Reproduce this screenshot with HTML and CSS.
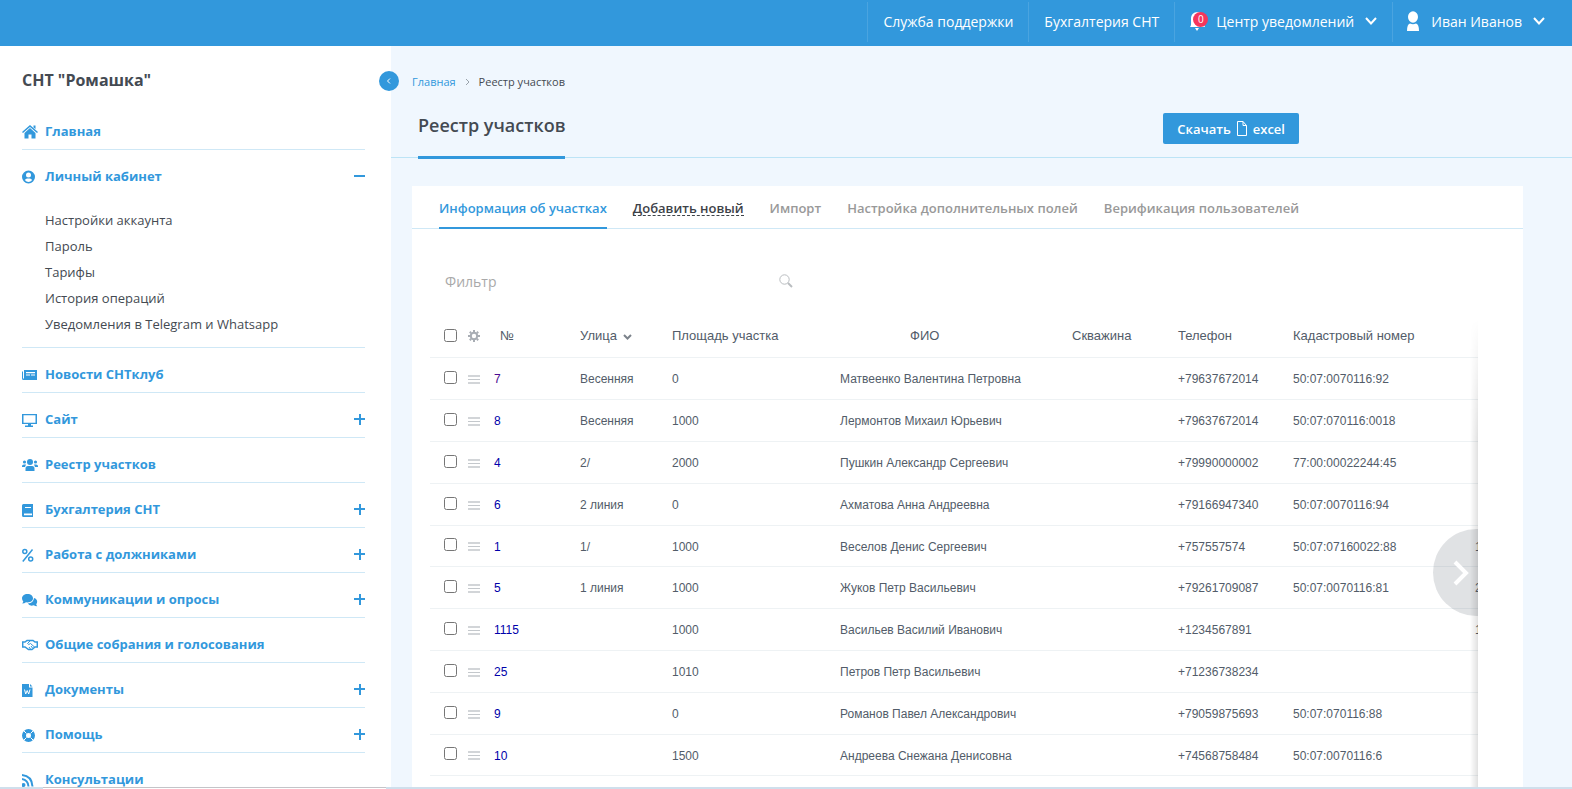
FILE: index.html
```html
<!DOCTYPE html>
<html lang="ru">
<head>
<meta charset="utf-8">
<title>Реестр участков</title>
<link rel="stylesheet" href="styles.css">
</head>
<body>
<header class="topbar">
  <a class="top-link" href="#">Служба поддержки</a>
  <a class="top-link" href="#">Бухгалтерия СНТ</a>
  <button class="top-link top-notify" type="button">
    <span class="bell">
      <svg width="18" height="20" viewBox="0 0 18 20"><path fill="#fff" d="M0 16 C1.500 14.500 1 12 1 8 C1 4 3 1 8 1 C12 1 14 4 14 9 C14 12 14 14.500 15 16 Z M5 17 H9 L7 20 Z"/></svg>
      <span class="badge">0</span>
    </span>
    Центр уведомлений
    <svg class="chev" width="12" height="8" viewBox="0 0 12 8"><path d="M1 1 L6 6.500 L11 1"/></svg>
  </button>
  <button class="top-link top-user" type="button">
    <svg width="14" height="20" viewBox="0 0 14 20"><ellipse cx="7" cy="6" rx="5" ry="5.700" fill="#fff"/><path fill="#fff" d="M1 20 C1 15.500 2 13 4 12.500 C6 13.500 8 13.500 10 12.500 C12 13 13 15.500 13 20 Z"/></svg>
    Иван Иванов
    <svg class="chev" width="12" height="8" viewBox="0 0 12 8"><path d="M1 1 L6 6.500 L11 1"/></svg>
  </button>
</header>
<div class="layout">
  <aside class="sidebar">
    <h2 class="org">СНТ "Ромашка"</h2>
    <button class="collapse" type="button" aria-label="Свернуть меню"><svg width="6" height="8" viewBox="0 0 6 8"><path d="M4 1.500 L1.500 4 L4 6.500"/></svg></button>
    <nav class="menu">
      <div class="item"><svg class="ico" viewBox="0 0 16 14"><path d="M8 0 L16 7 L15 8 L8 2 L1 8 L0 7 Z M11.500 0.500 H13.500 V4 L11.500 2.500 Z M8 3 L13.500 8 V13.500 H9.500 V9.500 H6.500 V13.500 H2.500 V8 Z"/></svg><a href="#">Главная</a></div>
      <div class="item open"><svg class="ico" viewBox="0 0 16 14"><path fill-rule="evenodd" d="M6.500 0.500 A6.500 6.500 0 1 1 6.500 13.500 A6.500 6.500 0 1 1 6.500 0.500 Z M6.500 2.500 A2.500 2.500 0 1 0 6.500 7.500 A2.500 2.500 0 1 0 6.500 2.500 Z M2.800 10 Q4.500 12 6.500 12 T10.200 10 Q9 8.500 8 8.500 H5 Q4 8.500 2.800 10 Z"/></svg><a href="#">Личный кабинет</a><button class="toggle minus" type="button" aria-label="Свернуть"></button></div>
      <ul class="sub">
        <li><a href="#">Настройки аккаунта</a></li>
        <li><a href="#">Пароль</a></li>
        <li><a href="#">Тарифы</a></li>
        <li><a href="#">История операций</a></li>
        <li><a href="#">Уведомления в Telegram и Whatsapp</a></li>
      </ul>
      <div class="item"><svg class="ico" viewBox="0 0 16 14"><path fill-rule="evenodd" d="M2 2 H15 V12 H1.500 Q0 12 0 10.500 V3.500 H1 V10.500 H2 Z M4 4 V5.200 H13 V4 Z M4 6.500 V7.500 H8 V6.500 Z M9 6.500 V7.500 H13 V6.500 Z"/></svg><a href="#">Новости СНТклуб</a></div>
      <div class="item"><svg class="ico" viewBox="0 0 16 14"><path fill-rule="evenodd" d="M0 1 H15 V11 H9 V12.500 H11 V14 H3 V12.500 H6 V11 H0 Z M1.500 2.200 V9.800 H13.500 V2.200 Z"/></svg><a href="#">Сайт</a><button class="toggle" type="button" aria-label="Развернуть"></button></div>
      <div class="item"><svg class="ico" viewBox="0 0 16 14"><circle cx="8" cy="4" r="3"/><circle cx="2.500" cy="4" r="1.600"/><circle cx="13.500" cy="4" r="1.600"/><path d="M3.500 13 V10.500 Q3.500 8 6 8 H10 Q12.500 8 12.500 10.500 V13 Z M0 9 V8 Q0 6.500 2 6.500 H4 L3 9 Z M16 9 V8 Q16 6.500 14 6.500 H12 L13 9 Z"/></svg><a href="#">Реестр участков</a></div>
      <div class="item"><svg class="ico" viewBox="0 0 16 14"><path fill-rule="evenodd" d="M1.500 1 H11 V14 H1.500 Q0 14 0 12.500 V2.500 Q0 1 1.500 1 Z M3 4 V5 H9 V4 Z M2 10.500 V12.300 H10 V10.500 Z"/></svg><a href="#">Бухгалтерия СНТ</a><button class="toggle" type="button" aria-label="Развернуть"></button></div>
      <div class="item"><svg class="ico line mid" viewBox="0 0 16 14"><circle cx="2.800" cy="3.500" r="2"/><circle cx="8.700" cy="11" r="2"/><path d="M10.500 1.500 L0.800 13.500"/></svg><a href="#">Работа с должниками</a><button class="toggle" type="button" aria-label="Развернуть"></button></div>
      <div class="item"><svg class="ico" viewBox="0 0 16 14"><path d="M5.500 1 C9 1 11 3 11 5.300 S9 9.500 5.500 9.500 L4 9.300 Q2.500 10.500 0.200 10.500 Q1 9.500 1.300 8.500 Q0 7 0 5.300 C0 3 2.200 1 5.500 1 Z M12 5 Q15.200 6 15.200 8.800 Q15.200 10.200 14.200 11.300 Q14.500 12.500 15.200 13.200 Q13 13.200 11.800 12.300 Q7.500 13.500 5.800 10.500 Q11.500 10 12 5 Z"/></svg><a href="#">Коммуникации и опросы</a><button class="toggle" type="button" aria-label="Развернуть"></button></div>
      <div class="item"><svg class="ico line mid" viewBox="0 0 16 14"><path d="M3 9 H0.700 V4 H3 L5 2.500 H11 L13 4 H15.300 V9 H13 L10 11.500 H6.500 Z"/><path class="fine" d="M8 3 L5.500 5.500 Q6.500 7.500 8.500 5.500 L12.500 9 M9 8 L10.500 10 M7 9 L8.500 11"/></svg><a href="#">Общие собрания и голосования</a></div>
      <div class="item"><svg class="ico" viewBox="0 0 16 14"><path d="M0 1 H7 V4.500 H10.500 V14 H0 Z M8 1 L10.500 3.500 H8 Z"/><path class="cut" d="M2.500 6.500 L3.700 11 L5.200 7.500 L6.700 11 L8 6.500"/></svg><a href="#">Документы</a><button class="toggle" type="button" aria-label="Развернуть"></button></div>
      <div class="item"><svg class="ico line" viewBox="0 0 16 14"><circle class="ring" cx="6.500" cy="7.500" r="4.500"/><path class="cut" d="M2 3 L4.500 5.500 M11 3 L8.500 5.500 M2 12 L4.500 9.500 M11 12 L8.500 9.500"/></svg><a href="#">Помощь</a><button class="toggle" type="button" aria-label="Развернуть"></button></div>
      <div class="item"><svg class="ico line" viewBox="0 0 16 14"><path d="M0 2 Q10 3 10.500 13.500 M0 6 Q6 7 6.500 13.500"/><circle cx="1.500" cy="12" r="1"/></svg><a href="#">Консультации</a></div>
    </nav>
  </aside>
  <main class="main">
    <div class="crumbs"><a href="#">Главная</a><svg width="5" height="8" viewBox="0 0 5 8"><path d="M1 1 L4 4 L1 7"/></svg><span>Реестр участков</span></div>
    <div class="head">
      <h1 class="title">Реестр участков</h1>
      <button class="download" type="button">Скачать <svg width="10" height="15" viewBox="0 0 10 15"><path d="M1 0.500 H6 L9.500 4.500 V14.500 H0.500 V0.500 Z M6 0.500 V4.500 H9.500"/></svg> excel</button>
    </div>
    <section class="panel">
      <nav class="tabs">
        <a class="tab active" href="#">Информация об участках</a>
        <a class="tab add" href="#"><span>Добавить новый</span></a>
        <a class="tab" href="#">Импорт</a>
        <a class="tab" href="#">Настройка дополнительных полей</a>
        <a class="tab" href="#">Верификация пользователей</a>
      </nav>
      <div class="filter">
        <input class="filter-input" type="text" placeholder="Фильтр" aria-label="Фильтр">
        <button class="search" type="button" aria-label="Найти"><svg width="14" height="14" viewBox="0 0 14 14"><circle cx="5.500" cy="5.500" r="4.700"/><path d="M9 9 L13 13" stroke-width="2"/></svg></button>
      </div>
      <div class="grid-wrap">
        <table class="grid">
          <colgroup><col class="c-check"><col class="c-menu"><col class="c-num"><col class="c-street"><col class="c-area"><col class="c-name"><col class="c-well"><col class="c-phone"><col class="c-cad"><col></colgroup>
          <thead><tr>
            <th><input type="checkbox" aria-label="Выбрать все"></th>
            <th><svg class="gear" width="12" height="12" viewBox="0 0 12 12"><circle cx="6" cy="6" r="3.200"/><path d="M6 0 V2 M6 10 V12 M0 6 H2 M10 6 H12 M1.800 1.800 L3.200 3.200 M8.800 8.800 L10.200 10.200 M1.800 10.200 L3.200 8.800 M8.800 3.200 L10.200 1.800"/></svg></th>
            <th class="h-num">№</th><th>Улица <svg class="sort" width="9" height="6" viewBox="0 0 9 6"><path d="M1 1 L4.500 4.500 L8 1"/></svg></th><th>Площадь участка</th><th class="h-name">ФИО</th><th>Скважина</th><th>Телефон</th><th>Кадастровый номер</th><th></th>
          </tr></thead>
          <tbody id="rows"></tbody>
        </table>
        <button class="next" type="button" aria-label="Прокрутить вправо"><svg width="16" height="26" viewBox="0 0 16 26"><path d="M2 2 L13 13 L2 24"/></svg></button>
      </div>
    </section>
  </main>
</div>
<div class="bottom-strip"><div class="strip-window"></div></div>
<script src="rows.js"></script>
</body>
</html>
```
FILE: rows.js
```js
const rows = [
  ["7", "Весенняя", "0", "Матвеенко Валентина Петровна", "+79637672014", "50:07:0070116:92", ""],
  ["8", "Весенняя", "1000", "Лермонтов Михаил Юрьевич", "+79637672014", "50:07:070116:0018", ""],
  ["4", "2/", "2000", "Пушкин Александр Сергеевич", "+79990000002", "77:00:00022244:45", ""],
  ["6", "2 линия", "0", "Ахматова Анна Андреевна", "+79166947340", "50:07:0070116:94", ""],
  ["1", "1/", "1000", "Веселов Денис Сергеевич", "+757557574", "50:07:07160022:88", "1"],
  ["5", "1 линия", "1000", "Жуков Петр Васильевич", "+79261709087", "50:07:0070116:81", "2"],
  ["1115", "", "1000", "Васильев Василий Иванович", "+1234567891", "", "1"],
  ["25", "", "1010", "Петров Петр Васильевич", "+71236738234", "", ""],
  ["9", "", "0", "Романов Павел Александрович", "+79059875693", "50:07:070116:88", ""],
  ["10", "", "1500", "Андреева Снежана Денисовна", "+74568758484", "50:07:0070116:6", ""]
];
document.getElementById("rows").innerHTML = rows.map(([n, street, area, name, phone, cad, extra]) =>
  `<tr><td><input type="checkbox" aria-label="Участок ${n}"></td>
  <td><button class="row-menu" type="button" aria-label="Меню"></button></td>
  <td><a class="num" href="#">${n}</a></td><td>${street}</td><td>${area}</td><td>${name}</td><td></td><td>${phone}</td><td>${cad}</td><td>${extra}</td></tr>`
).join("");
```
FILE: styles.css
```css
* { box-sizing: border-box; }
body { margin: 0; height: 100vh; display: flex; flex-direction: column; overflow: hidden; background: #f0f7fe; color: #444a52; font-family: "Open Sans", sans-serif; font-size: 13px; }
a { color: inherit; text-decoration: none; }
button { border: 0; padding: 0; margin: 0; background: none; color: inherit; font: inherit; cursor: pointer; }
svg { fill: none; flex: none; }

.topbar { display: flex; flex: none; justify-content: flex-end; align-items: flex-start; height: 46px; padding: 2px 12px 0 0; background: #3298dc; color: #fff; }
.top-link { display: flex; align-items: center; height: 40px; padding: 0 15px 2px; border-left: 1px solid #4aa4e0; font-size: 14px; }
.bell { position: relative; display: flex; margin-right: 8px; }
.badge { position: absolute; left: 3px; top: 1px; width: 15px; height: 15px; border-radius: 50%; background: #f5365c; font-size: 10px; line-height: 15px; text-align: center; }
.top-user { padding-left: 13px; }
.top-user svg:first-child { margin-right: 11px; }
.chev { margin-left: 11px; stroke: #fff; stroke-width: 2; }

.layout { display: flex; flex: 1; min-height: 0; }
.sidebar { position: relative; flex: none; width: 391px; padding: 22px 26px 0 22px; background: #fff; }
.org { margin: 0; font-size: 16px; line-height: 24px; font-weight: 700; }
.collapse { position: absolute; right: -8px; top: 25px; display: flex; align-items: center; justify-content: center; width: 20px; height: 20px; border-radius: 50%; background: #3298dc; }
.collapse path { stroke: #fff; stroke-width: 1; }
.menu { display: flex; flex-direction: column; padding-top: 13px; }
.item { display: flex; flex: none; align-items: center; height: 45px; padding-top: 8px; border-bottom: 1px solid #cfe8f6; color: #3298dc; font-weight: 700; }
.item.open { border-bottom-color: transparent; }
.ico { width: 16px; height: 14px; margin: 2px 7px 0 0; fill: #3298dc; }
.ico.line { fill: none; stroke: #3298dc; stroke-width: 2; }
.ico.mid { stroke-width: 1.5; }
.ico .fine { stroke-width: 1; }
.ico .cut { fill: none; stroke: #fff; stroke-width: 1; }
.ico .ring { stroke-width: 4; }
.toggle { width: 11px; height: 11px; margin-left: auto; background: linear-gradient(#3298dc, #3298dc) center / 11px 2px no-repeat, linear-gradient(#3298dc, #3298dc) center / 2px 11px no-repeat; }
.toggle.minus { background: linear-gradient(#3298dc, #3298dc) center / 11px 2px no-repeat; }
.sub { margin: 0; padding: 12px 0 10px 23px; list-style: none; border-bottom: 1px solid #cfe8f6; }
.sub li { height: 26px; line-height: 26px; }

.main { display: flex; flex-direction: column; flex: 1; min-width: 0; }
.crumbs { display: flex; align-items: center; gap: 9px; padding: 26px 21px 0; font-size: 11px; line-height: 20px; }
.crumbs a { color: #3298dc; }
.crumbs path { stroke: #9aa3ab; stroke-width: 1; }
.head { display: flex; justify-content: space-between; align-items: flex-start; height: 66px; padding: 0 273px 0 27px; border-bottom: 1px solid #bde4f6; }
.title { height: 67px; margin: 0; padding-top: 20px; border-bottom: 3px solid #3298dc; font-size: 18px; line-height: 26px; font-weight: 600; }
.download { display: flex; align-items: center; gap: 6px; height: 31px; margin-top: 21px; padding: 0 14px; border-radius: 2px; background: #3298dc; color: #fff; font-size: 13px; font-weight: 600; }
.download path { stroke: #fff; stroke-width: 1; }
.panel { display: flex; flex-direction: column; flex: 1; min-height: 0; margin: 28px 49px 0 21px; background: #fff; }
.tabs { display: flex; flex: none; gap: 26px; height: 43px; padding: 0 27px; border-bottom: 1px solid #cfe8f6; color: #999; font-size: 13px; font-weight: 600; line-height: 44px; }
.tab { height: 43px; white-space: nowrap; }
.tab.active { color: #3298dc; border-bottom: 2px solid #3298dc; }
.tab.add { color: #3d4248; }
.tab.add span { border-bottom: 1px dashed #3d4248; line-height: 14px; display: inline-block; }
.filter { display: flex; flex: none; align-items: center; width: 380px; margin: 37px 0 0 33px; height: 30px; }
.filter-input { flex: 1; min-width: 0; padding: 0; border: 0; outline: 0; background: none; font: 14px "Open Sans", sans-serif; }
.filter-input::placeholder { color: #a9a9a9; }
.search { display: flex; margin-right: 32px; }
.search svg { stroke: #b9bdc0; stroke-width: 1; }

.grid-wrap { position: relative; flex: 1; min-height: 0; margin: 23px 45px 0 18px; overflow: hidden; }
.grid-wrap::after { content: ""; position: absolute; top: 0; right: 0; bottom: 0; width: 8px; background: linear-gradient(to right, transparent, rgba(0, 0, 0, 0.12)); mask-image: linear-gradient(transparent, #000 120px); }
.grid { width: 100%; border-collapse: collapse; table-layout: fixed; color: #525c69; font: 12px "Liberation Sans", Arial, sans-serif; }
.grid th, .grid td { height: 42px; padding: 2px 0 0; border-bottom: 1px solid #eef2f4; text-align: left; font-weight: 400; white-space: nowrap; }
.grid th { height: 38px; padding: 0 0 4px; font-size: 13px; }
.grid tr:nth-child(5n) td { height: 41px; }
.c-check { width: 38px; }
.c-menu { width: 26px; }
.c-num { width: 86px; }
.c-street { width: 92px; }
.c-area { width: 168px; }
.c-name { width: 232px; }
.c-well { width: 106px; }
.c-phone { width: 115px; }
.c-cad { width: 182px; }
.grid input { display: block; width: 13px; height: 13px; margin: 0 0 0 14px; }
.grid td input { margin-top: -4px; }
.grid .h-num { padding-left: 6px; }
.grid .h-name { padding-left: 70px; }
.gear { display: block; stroke: #a8adb4; stroke-width: 2; }
.sort { stroke: #7c838b; stroke-width: 2; margin-left: 2px; }
.row-menu { display: block; width: 12px; height: 9px; border-top: 2px solid #d2d5d8; border-bottom: 2px solid #d2d5d8; background: linear-gradient(#c4c8cc, #c4c8cc) center / 12px 1px no-repeat; }
.num { color: #00a; }
tr:first-child .num { color: #4b0a91; }
.next { position: absolute; right: -42px; top: 210px; display: flex; align-items: center; width: 87px; height: 87px; padding-left: 20px; border-radius: 50%; background: rgba(83, 92, 105, 0.18); }
.next path { stroke: #fff; stroke-width: 4; }
.bottom-strip { flex: none; height: 2px; background: #cfdfec; }
.strip-window { width: 343px; height: 2px; margin-left: 43px; border-top: 1px solid #c4c4c8; background: #fff; }
```
